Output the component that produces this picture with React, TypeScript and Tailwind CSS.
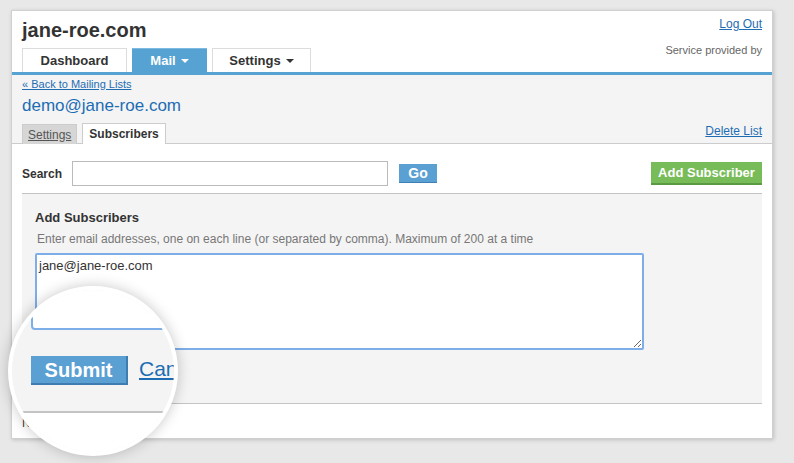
import React from 'react';

// ─── Header ──────────────────────────────────────────────────────────────────

function NavTabs() {
  return (
    <div className="mt-[6px] flex gap-[5px]">
      <div className="flex h-[24px] w-[105px] items-center justify-center border border-b-0 border-[#dcdcdc] bg-white text-[13px] font-bold text-[#333]">
        Dashboard
      </div>
      <div className="flex h-[24px] w-[75px] items-center justify-center gap-[5px] border-t border-[#7db9e0] bg-[#56a2d2] text-[13px] font-bold text-white">
        Mail
        <span className="mt-[1px] h-0 w-0 border-x-[4px] border-t-[4px] border-x-transparent border-t-white" />
      </div>
      <div className="flex h-[24px] w-[99px] items-center justify-center gap-[5px] border border-b-0 border-[#dcdcdc] bg-white text-[13px] font-bold text-[#333]">
        Settings
        <span className="mt-[1px] h-0 w-0 border-x-[4px] border-t-[4px] border-x-transparent border-t-[#333]" />
      </div>
    </div>
  );
}

function Header() {
  return (
    <div className="flex items-start justify-between pl-[10px] pr-[10px]">
      <div className="pt-[7px]">
        <div className="h-[24px] text-[20px] font-bold leading-[24px] text-[#333]">jane-roe.com</div>
        <NavTabs />
      </div>
      <div className="flex flex-col items-end pt-[5px]">
        <a className="text-[12px] leading-[16px] text-[#1e6db3] underline">Log Out</a>
        <div className="mt-[11px] text-[11px] leading-[14px] text-[#666]">Service provided by</div>
      </div>
    </div>
  );
}

// ─── List section ────────────────────────────────────────────────────────────

function ListHeader() {
  return (
    <div className="border-t-[3px] border-b border-t-[#56a2d2] border-b-[#cccccc] bg-[#f4f4f4] px-[10px] pt-[3px]">
      <a className="block text-[11px] leading-[13px] text-[#1e6db3] underline">« Back to Mailing Lists</a>
      <div className="mt-[5px] text-[17px] leading-[20px] text-[#1e6db3]">demo@jane-roe.com</div>
      <div className="mt-[7px] flex items-end justify-between">
        <div className="-mb-px flex items-end gap-[5px]">
          <div className="flex h-[20px] items-center border border-b-0 border-[#cccccc] bg-[#d6d6d6] px-[5px] text-[12px] text-[#555] underline">
            Settings
          </div>
          <div className="flex h-[21px] items-center border border-b-0 border-[#cccccc] bg-white px-[6px] text-[12px] font-bold text-[#333]">
            Subscribers
          </div>
        </div>
        <a className="mb-[5px] text-[12px] leading-[14px] text-[#1e6db3] underline">Delete List</a>
      </div>
    </div>
  );
}

function SearchRow() {
  return (
    <div className="flex items-center px-[10px] pt-[17px]">
      <span className="w-[50px] text-[12px] font-bold text-[#333]">Search</span>
      <div className="h-[25px] w-[316px] border border-[#bbbbbb] bg-white" />
      <button className="ml-[11px] h-[19px] w-[38px] border-b border-[#3f7fb3] bg-[#5aa0d2] text-[14px] font-bold leading-[18px] text-white">
        Go
      </button>
      <button className="ml-auto h-[23px] w-[111px] border-b-2 border-[#5a9a42] bg-[#78bc5a] text-[13px] font-bold leading-[20px] text-white">
        Add Subscriber
      </button>
    </div>
  );
}

function AddPanel() {
  return (
    <div className="mx-[10px] mt-[7px] h-[211px] border-y border-[#c4c4c4] bg-[#f4f4f4] pl-[13px] pt-[16px]">
      <div className="text-[13px] font-bold leading-[16px] text-[#333]">Add Subscribers</div>
      <div className="mt-[6px] pl-[2px] text-[12px] leading-[15px] text-[#777]">
        Enter email addresses, one on each line (or separated by comma). Maximum of 200 at a time
      </div>
      <textarea
        defaultValue="jane@jane-roe.com"
        className="mt-[6px] block h-[97px] w-[609px] rounded-[2px] border-2 border-[#7eaee8] bg-white px-[2px] py-[3px] text-[13px] leading-[16px] text-[#333] outline-none"
      />
      <div className="mt-[9px] flex items-center gap-[8px]">
        <button className="h-[20px] w-[66px] border-b border-[#3f7fb3] bg-[#5aa0d2] text-[13px] font-bold text-white">
          Submit
        </button>
        <a className="text-[13px] text-[#1e6db3] underline">Cancel</a>
      </div>
    </div>
  );
}

// ─── Magnifier overlay ───────────────────────────────────────────────────────

function Magnifier() {
  return (
    <div className="absolute left-[8px] top-[286px] h-[170px] w-[170px] overflow-hidden rounded-full border-4 border-white bg-[#f4f4f4] shadow-[0_0_14px_rgba(0,0,0,0.22)]">
      <div className="absolute left-[19px] top-[-50px] h-[90px] w-[400px] rounded-[4px] border-2 border-[#7eaee8] bg-white" />
      <div className="absolute left-[19px] top-[66px] flex h-[29px] w-[97px] items-center justify-center border-r-2 border-b-2 border-[#3d7db2] bg-[#5aa0d2] text-[20px] font-bold text-white">
        Submit
      </div>
      <div className="absolute left-[127px] top-[67px] text-[21px] leading-[24px] text-[#1e6db3] underline">Cancel</div>
      <div className="absolute left-0 right-0 top-[121px] h-[2px] bg-[#c4c4c4]" />
      <div className="absolute bottom-0 left-0 right-0 top-[123px] bg-white" />
    </div>
  );
}

// ─── Page ────────────────────────────────────────────────────────────────────

export default function App() {
  return (
    <div className="relative h-[463px] w-[794px] overflow-hidden bg-[#e8e8e8] font-['Liberation_Sans',Arial,sans-serif]">
      <div className="ml-[11px] mt-[10px] h-[429px] w-[762px] border border-[#d0d0d0] bg-white shadow-[1px_1px_4px_rgba(0,0,0,0.18)]">
        <Header />
        <ListHeader />
        <SearchRow />
        <AddPanel />
        <div className="px-[10px] pt-[10px] text-[12px] text-[#333]">No subscribers.</div>
      </div>
      <Magnifier />
    </div>
  );
}
